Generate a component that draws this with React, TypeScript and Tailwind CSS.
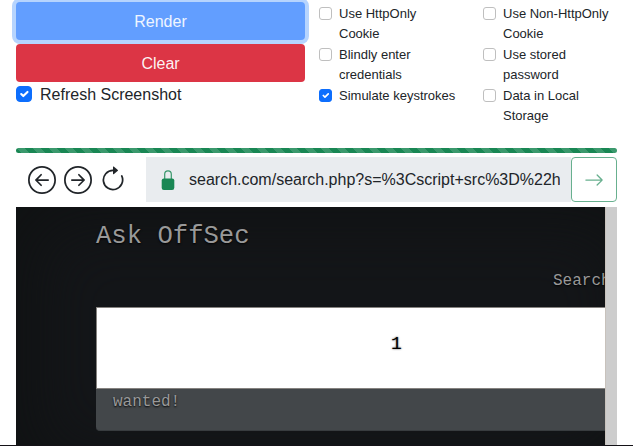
import React from "react";
import {
  BsArrowClockwise,
  BsArrowLeftCircle,
  BsArrowRight,
  BsArrowRightCircle,
} from "react-icons/bs";

type CheckProps = { checked?: boolean; large?: boolean };

function Check({ checked = false, large = false }: CheckProps) {
  const size = large ? "size-4 rounded" : "size-[13px] rounded-[3px]";
  const tone = checked ? "border-[#0d6efd] bg-[#0d6efd]" : "border-[#bfbfbf] bg-white";
  return (
    <span
      role="checkbox"
      aria-checked={checked}
      className={`flex shrink-0 items-center justify-center overflow-hidden border ${size} ${tone}`}
    >
      {checked && (
        <svg viewBox="0 0 20 20" className="size-full" fill="none">
          <path
            d="m6 10 3 3 6-6"
            stroke="#fff"
            strokeWidth="3"
            strokeLinecap="round"
            strokeLinejoin="round"
          />
        </svg>
      )}
    </span>
  );
}

type OptionProps = { label: string; checked?: boolean };

function Option({ label, checked }: OptionProps) {
  return (
    <label className="flex h-[41px] items-start gap-[7px] text-[13px] leading-5">
      <span className="pt-1">
        <Check checked={checked} />
      </span>
      <span className="pt-px">{label}</span>
    </label>
  );
}

function Controls() {
  return (
    <section className="flex h-[146px] pt-0.5 pl-4">
      <div className="w-[289px]">
        <button className="block h-[38px] w-full rounded bg-[#629eff] pt-0.5 text-base text-white/90 shadow-[0_0_0_4px_#b6d4fe]">
          Render
        </button>
        <button className="relative mt-1 block h-[38px] w-full rounded bg-[#dc3545] pt-0.5 text-base text-white/95">
          Clear
        </button>
        <label className="mt-1 flex h-4 items-center gap-2 leading-4">
          <Check checked large />
          <span className="pt-0.5">Refresh Screenshot</span>
        </label>
      </div>
      <div className="ml-3.5 grid w-[300px] grid-cols-[164px_136px] content-start pt-px">
        <div className="w-[140px]">
          <Option label="Use HttpOnly Cookie" />
          <Option label="Blindly enter credentials" />
          <Option label="Simulate keystrokes" checked />
        </div>
        <div>
          <Option label="Use Non-HttpOnly Cookie" />
          <Option label="Use stored password" />
          <Option label="Data in Local Storage" />
        </div>
      </div>
    </section>
  );
}

function Lock() {
  return (
    <svg viewBox="0 0 20 20" className="size-5 shrink-0" fill="none">
      <path
        d="M6.7 9V4.2C6.7 2.2 8 .9 10 .9s3.3 1.3 3.3 3.3V9"
        stroke="#198754"
        strokeOpacity="0.85"
        strokeWidth="1.2"
      />
      <rect x="3.7" y="8.4" width="12.6" height="11.6" rx="2.2" fill="#198754" />
    </svg>
  );
}

function AddressBar() {
  return (
    <div className="mx-4 mt-1 flex h-[45px]">
      <nav className="flex w-[130px] items-center pl-[11.5px]">
        <BsArrowLeftCircle size={28} />
        <BsArrowRightCircle size={28} className="ml-2" />
        <BsArrowClockwise size={28} className="ml-[7px]" />
      </nav>
      <div className="flex flex-1 items-center overflow-hidden bg-[#e9ecef] pr-[11px] pl-3">
        <Lock />
        <span className="ml-[11px] overflow-hidden whitespace-nowrap">
          search.com/search.php?s=%3Cscript+src%3D%22http
        </span>
      </div>
      <button className="flex w-[46px] items-center justify-center rounded border border-[#198754] bg-white text-[#198754] opacity-65">
        <BsArrowRight size={20} />
      </button>
    </div>
  );
}

function Preview() {
  return (
    <div className="mx-4 mt-[5px] flex h-[238px]">
      <div className="flex-1 overflow-hidden bg-[#141619] pl-20 font-['Liberation_Mono',monospace] text-[#999] shadow-[inset_20px_16px_70px_#101213] [text-shadow:0_1px_2px_#000]">
        <h1 className="h-[65px] pt-[15px] text-[25.6px] leading-[30px]">Ask OffSec</h1>
        <div className="flex h-[35px] pt-px pl-[457px] leading-4">
          <span className="whitespace-nowrap">Search</span>
        </div>
        <div className="h-[124px] rounded-bl border-b border-[#383c3f] bg-[#43474a]">
          <div className="flex h-[82px] items-center border-y border-l border-[#85827f] bg-white pl-[294px] text-[18px] text-black [text-shadow:0_0_2px_#444]">
            <span className="-mt-2">1</span>
          </div>
          <p className="pt-1 pl-[17px] leading-[18px]">wanted!</p>
        </div>
      </div>
      <div className="w-3 border-l border-[#c8c2bc] bg-[#cdcdcd]" />
    </div>
  );
}

export default function App() {
  return (
    <main className="h-[446px] w-[633px] overflow-hidden bg-white font-['Liberation_Sans',Arial,sans-serif] text-base text-[#212529]">
      <Controls />
      <div className="mx-4 mt-0.5 h-[5px] rounded bg-[#198754] bg-[linear-gradient(45deg,rgba(255,255,255,0.15)_25%,transparent_25%,transparent_50%,rgba(255,255,255,0.15)_50%,rgba(255,255,255,0.15)_75%,transparent_75%,transparent)] bg-[length:16px_16px]" />
      <AddressBar />
      <Preview />
      <div className="h-px bg-[#141217]" />
    </main>
  );
}
